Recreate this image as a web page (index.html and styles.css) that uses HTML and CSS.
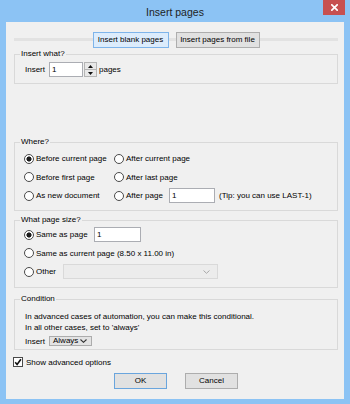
FILE: index.html
```html
<!DOCTYPE html>
<html lang="en">
<head>
<meta charset="utf-8">
<title>Insert pages</title>
<link rel="stylesheet" href="styles.css">
</head>
<body>
<div class="window">
  <div class="titlebar">
    <div class="title">Insert pages</div>
    <button class="close" aria-label="Close"><svg width="7" height="7" viewBox="0 0 7 7"><path d="M0.8 0.8 L6.2 6.2 M6.2 0.8 L0.8 6.2" stroke="#fff" stroke-width="1.7" stroke-linecap="square"/></svg></button>
  </div>
  <div class="client">
    <div class="tabs">
      <button class="btn btn-active tab-blank">Insert blank pages</button>
      <button class="btn tab-file">Insert pages from file</button>
    </div>

    <fieldset class="group g-what">
      <legend>Insert what?</legend>
      <div class="what-row">
        <span class="what-lbl">Insert</span>
        <input class="field what-input" type="text" value="1">
        <span class="spin">
          <span class="spin-btn"><svg width="5" height="3" viewBox="0 0 5 3"><path d="M0 3 L2.5 0 L5 3 Z" fill="#111"/></svg></span>
          <span class="spin-btn"><svg width="5" height="3" viewBox="0 0 5 3"><path d="M0 0 L2.5 3 L5 0 Z" fill="#111"/></svg></span>
        </span>
        <span class="pages-lbl">pages</span>
      </div>
    </fieldset>

    <fieldset class="group g-where">
      <legend>Where?</legend>
      <div class="where-grid">
        <label class="opt"><span class="radio on"></span>Before current page</label>
        <label class="opt span3"><span class="radio"></span>After current page</label>
        <label class="opt"><span class="radio"></span>Before first page</label>
        <label class="opt span3"><span class="radio"></span>After last page</label>
        <label class="opt"><span class="radio"></span>As new document</label>
        <label class="opt"><span class="radio"></span>After page</label>
        <input class="field where-input" type="text" value="1">
        <span class="tip">(Tip: you can use LAST-1)</span>
      </div>
    </fieldset>

    <fieldset class="group g-size">
      <legend>What page size?</legend>
      <div class="size-list">
        <div class="size-row">
          <label class="opt opt-same"><span class="radio on"></span>Same as page</label>
          <input class="field size-input" type="text" value="1">
        </div>
        <div class="size-row">
          <label class="opt"><span class="radio"></span>Same as current page (8.50 x 11.00 in)</label>
        </div>
        <div class="size-row">
          <label class="opt opt-other"><span class="radio"></span>Other</label>
          <div class="combo combo-disabled">
            <span class="combo-text"></span>
            <svg width="7" height="4" viewBox="0 0 7 4"><path d="M0.5 0.5 L3.5 3.3 L6.5 0.5" fill="none" stroke="#a8a8a8" stroke-width="1"/></svg>
          </div>
        </div>
      </div>
    </fieldset>

    <fieldset class="group g-cond">
      <legend>Condition</legend>
      <p class="cond-text">In advanced cases of automation, you can make this conditional.<br>In all other cases, set to 'always'</p>
      <div class="cond-row">
        <span class="what-lbl">Insert</span>
        <div class="combo combo-always">
          <span class="combo-text">Always</span>
          <svg width="7" height="4" viewBox="0 0 7 4"><path d="M0.5 0.5 L3.5 3.3 L6.5 0.5" fill="none" stroke="#333" stroke-width="1.1"/></svg>
        </div>
      </div>
    </fieldset>

    <label class="check-row"><span class="check"><svg width="8" height="8" viewBox="0 0 8 8"><path d="M1.2 4.2 L3.1 6.4 L6.9 1.2" fill="none" stroke="#111" stroke-width="1.6"/></svg></span>Show advanced options</label>

    <div class="dlg-buttons">
      <button class="btn btn-default dlg-btn">OK</button>
      <button class="btn dlg-btn">Cancel</button>
    </div>
  </div>
</div>
</body>
</html>
```

FILE: styles.css
```css
* { box-sizing: border-box; }
html, body { margin: 0; padding: 0; }
body {
  width: 350px;
  height: 404px;
  overflow: hidden;
  font-family: "Liberation Sans", Arial, sans-serif;
  font-size: 8px;
  color: #000;
  background: #8cc3f4;
}
.window {
  width: 350px;
  height: 404px;
  display: flex;
  flex-direction: column;
  background: #8cc3f4;
}
.titlebar {
  flex: none;
  height: 22px;
  display: grid;
  grid-template-columns: 1fr auto 1fr;
  align-items: start;
}
.title {
  grid-column: 2;
  font-size: 10.5px;
  line-height: 22px;
  padding-top: 1px;
  color: #1e1e1e;
  white-space: nowrap;
}
.close {
  grid-column: 3;
  justify-self: end;
  width: 22px;
  height: 15px;
  margin: 0 5px 0 0;
  padding: 0;
  border: 0;
  background: #c75050;
  display: flex;
  align-items: center;
  justify-content: center;
}
.client {
  flex: none;
  height: 377px;
  margin: 0 6px;
  background: #f0f0f0;
  padding: 0 6px 0 8px;
  display: flex;
  flex-direction: column;
}
.tabs {
  flex: none;
  margin-top: 10px;
  height: 16px;
  display: flex;
  justify-content: center;
  gap: 7px;
  background: linear-gradient(#e2e2e2, #e2e2e2) 0 6px / 100% 3px no-repeat;
}
.btn {
  font: inherit;
  color: #000;
  height: 16px;
  padding: 0;
  border: 1px solid #adadad;
  background: #e1e1e1;
  display: flex;
  align-items: center;
  justify-content: center;
  line-height: 1;
}
.btn-active { background: #dcecfc; border-color: #7eb4ea; }
.btn-default { border-color: #6aa5dd; }
.tab-blank { width: 76px; }
.tab-file { width: 84px; }

.group {
  margin: 0;
  border: 1px solid #d9d9d9;
  padding: 0 6px 0 10px;
  min-width: 0;
}
.group legend {
  padding: 0 1px;
  margin-left: -5px;
  line-height: 10px;
  height: 10px;
}
.g-what { margin-top: 1px; padding-top: 3px; padding-bottom: 6px; }
.g-where { margin-top: 53px; padding-top: 4px; padding-bottom: 7px; }
.g-size { margin-top: 4px; padding-top: 2px; padding-bottom: 8px; }
.g-cond { margin-top: 6px; padding-top: 6.5px; padding-bottom: 3px; }

.field {
  font: inherit;
  color: #000;
  height: 15px;
  border: 1px solid #abadb3;
  background: #fff;
  padding: 0 2px;
  margin: 0;
  outline: none;
}
.what-row { display: flex; align-items: center; height: 15px; }
.what-lbl { width: 24px; flex: none; }
.what-input { width: 34px; }
.spin {
  display: flex;
  flex-direction: column;
  margin-left: 1px;
  width: 13px;
  height: 15px;
}
.spin-btn {
  flex: 1;
  border: 1px solid #b5b5b5;
  background: #e8e8e8;
  display: flex;
  align-items: center;
  justify-content: center;
}
.spin-btn + .spin-btn { border-top: 0; }
.pages-lbl { margin-left: 2px; }

.opt {
  display: flex;
  align-items: center;
  gap: 2px;
  white-space: nowrap;
}
.radio {
  flex: none;
  width: 10px;
  height: 10px;
  border: 1px solid #4a4a4a;
  border-radius: 50%;
  background: #fff;
}
.radio.on { background: radial-gradient(circle, #1c1c1c 0 2.2px, #fff 2.9px); }

.where-grid {
  display: grid;
  grid-template-columns: 90px 55px 46px auto;
  grid-auto-rows: 15px;
  row-gap: 3.5px;
  align-items: center;
  margin-left: -1px;
}
.span3 { grid-column: span 3; }
.where-input { width: 46px; }
.tip { margin-left: 4px; white-space: nowrap; }

.size-list {
  display: flex;
  flex-direction: column;
  gap: 3.5px;
  margin-left: -1px;
}
.size-row { height: 15px; display: flex; align-items: center; }
.opt-same { width: 70px; flex: none; }
.opt-other { width: 39px; flex: none; }
.size-input { width: 47px; }

.combo {
  display: flex;
  align-items: center;
  justify-content: space-between;
}
.combo-disabled {
  width: 155px;
  height: 15px;
  border: 1px solid #d9d9d9;
  background: #ececec;
  padding: 0 7px 0 3px;
}
.combo-always {
  width: 43px;
  height: 10px;
  border: 1px solid #acacac;
  background: #e3e3e3;
  padding: 0 4px 0 3px;
  line-height: 8px;
}

.cond-text { margin: 0; line-height: 11px; }
.cond-row { margin-top: 3.5px; height: 10px; display: flex; align-items: center; }

.check-row {
  flex: none;
  margin-top: 7px;
  margin-left: -1px;
  height: 10px;
  display: flex;
  align-items: center;
  gap: 3px;
}
.check {
  width: 10px;
  height: 10px;
  border: 1px solid #4a4a4a;
  background: #fff;
  display: flex;
  align-items: center;
  justify-content: center;
}
.dlg-buttons {
  flex: none;
  margin-top: 6px;
  display: flex;
  justify-content: center;
  gap: 18px;
}
.dlg-btn { width: 53px; }
```
